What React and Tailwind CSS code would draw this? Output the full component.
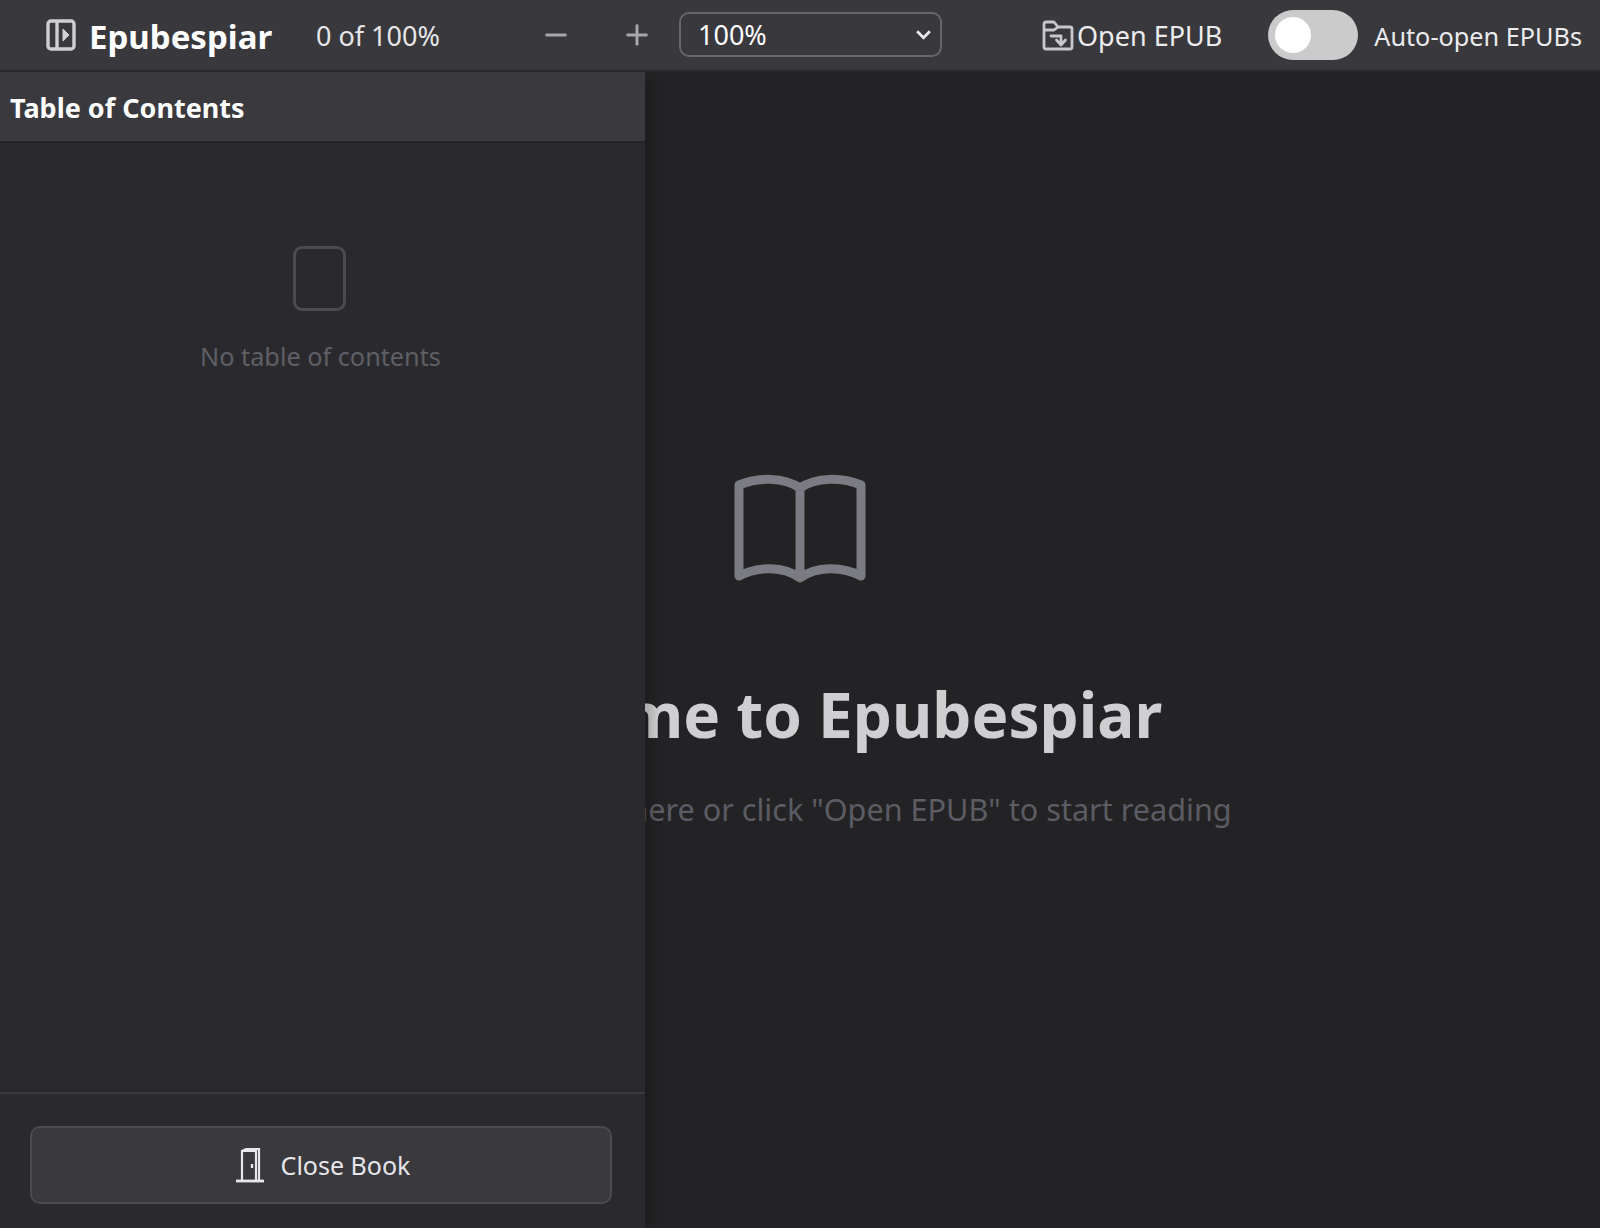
import React from 'react';
import { Minus, Plus } from 'lucide-react';

const PanelIcon = () => (
    <svg className="w-[30px] h-[32px] shrink-0" viewBox="0 0 30 32" fill="none" stroke="#cfcfd3" strokeWidth="3.4">
        <rect x="2" y="2" width="26" height="28" rx="3" />
        <path d="M11 2v28" />
        <path d="M17 10l6 6-6 6z" fill="#cfcfd3" strokeWidth="1" />
    </svg>
);

const FolderIcon = () => (
    <svg className="w-[32px] h-[32px] shrink-0" viewBox="0 0 32 32" fill="none" stroke="#c8c8cc" strokeWidth="2.8" strokeLinejoin="round">
        <path d="M2 5a2 2 0 0 1 2-2h8l4 5h12a2 2 0 0 1 2 2v18a2 2 0 0 1-2 2H4a2 2 0 0 1-2-2z" />
        <path d="M2 11h10l4-3" />
        <path d="M9 17h10v8M14.5 21l4.5 5 4.5-5" strokeLinecap="round" />
    </svg>
);

const DoorIcon = () => (
    <svg className="w-[28px] h-[36px] shrink-0" viewBox="0 0 28 36" fill="none" stroke="#e8e8ec" strokeWidth="2.2">
        <path d="M0 34h28" strokeWidth="2.8" />
        <path d="M6 33V4h14v29" />
        <path d="M6 4l4-2h13v31" />
        <path d="M16 17v4" strokeWidth="2.4" />
    </svg>
);

const BookIcon = () => (
    <svg className="w-[132px] h-[110px]" viewBox="0 0 132 110" fill="none" stroke="#7b7b84" strokeWidth="9" strokeLinejoin="round">
        <path d="M66 14C50 3 24 3 5 11V102C24 92 50 92 66 104C82 92 108 92 127 102V11C108 3 82 3 66 14V104" />
    </svg>
);

const App = () => {
    return (
        <div className="h-[1228px] flex flex-col overflow-hidden bg-[#232325] text-white font-['Noto_Sans',sans-serif]">
            {/* Toolbar */}
            <header className="h-[72px] shrink-0 flex items-center bg-[#38383d] border-b-2 border-[#2a2a2e] pl-[46px]">
                <PanelIcon />
                <h1 className="ml-[13px] mt-[3px] w-[227px] text-[33px] font-bold">Epubespiar</h1>
                <span className="mt-[3px] w-[224px] text-[27px] text-[#e6e6e8]">0 of 100%</span>
                <button className="w-[81px] flex text-[#a8a8ac]">
                    <Minus className="w-[32px] h-[32px]" strokeWidth={2.2} />
                </button>
                <button className="w-[58px] flex text-[#a8a8ac]">
                    <Plus className="w-[32px] h-[32px]" strokeWidth={2.2} />
                </button>
                <div className="relative w-[263px] h-[45px] -mt-[2px]">
                    <select className="w-full h-full appearance-none bg-transparent border-2 border-[#66666b] rounded-[10px] pl-[17px] pt-[1px] text-[27px] text-white outline-none">
                        <option>100%</option>
                    </select>
                    <svg className="absolute right-[10px] top-[14px] w-[17px] h-[17px]" viewBox="0 0 16 16" fill="none" stroke="#e8e8e8" strokeWidth="2.6">
                        <path d="M2 5l6 6 6-6" />
                    </svg>
                </div>
                <button className="ml-[100px] flex items-center text-[27px] text-[#ececee]">
                    <FolderIcon />
                    <span className="ml-[3px] mt-[3px]">Open EPUB</span>
                </button>
                <div className="ml-[46px] w-[90px] h-[50px] rounded-full bg-[#cbcbcb] flex items-center pl-[7px]">
                    <div className="w-[36px] h-[36px] rounded-full bg-white"></div>
                </div>
                <span className="ml-[16px] mt-[3px] text-[25.25px] text-[#ececee] whitespace-nowrap">Auto-open EPUBs</span>
            </header>

            <div className="relative flex-1 min-h-0">
                {/* Welcome screen, the drawer lies over its left part */}
                <main className="h-full pt-[6px] flex flex-col items-center justify-center">
                    <BookIcon />
                    <h2 className="mt-[86px] text-[62px] leading-[88px] font-bold text-[#cfcfd1] whitespace-nowrap">Welcome to Epubespiar</h2>
                    <p className="mt-[29px] text-[30.6px] text-[#5c5c64] whitespace-nowrap">Drop an EPUB file here or click "Open EPUB" to start reading</p>
                </main>

                {/* Drawer */}
                <aside className="absolute left-0 top-0 bottom-0 w-[645px] flex flex-col bg-[#2a2a2e] shadow-[14px_0_8px_-6px_rgba(0,0,0,0.16)]">
                    <div className="h-[71px] shrink-0 flex items-center pl-[10px] bg-[#39393e] border-b-2 border-[#242427] text-[27px] font-bold">
                        <span className="mt-[3px]">Table of Contents</span>
                    </div>
                    <div className="flex-1 flex flex-col items-center pt-[103px] pr-[4px]">
                        <div className="-ml-[3px] w-[53px] h-[65px] rounded-[9px] border-[3px] border-[#4a4a4f]"></div>
                        <p className="mt-[27px] text-[25.25px] text-[#5f5f66]">No table of contents</p>
                    </div>
                    <div className="h-[136px] shrink-0 border-t-2 border-[#39393e] pt-[32px] pl-[30px] pr-[33px]">
                        <button className="w-full h-[78px] pl-[4px] flex items-center justify-center gap-[17px] bg-[#39393e] border-2 border-[#4a4a4f] rounded-[10px] text-[25px] text-[#e6e6ea]">
                            <DoorIcon />
                            <span className="mt-[1px]">Close Book</span>
                        </button>
                    </div>
                </aside>
            </div>
        </div>
    );
};

export default App;
